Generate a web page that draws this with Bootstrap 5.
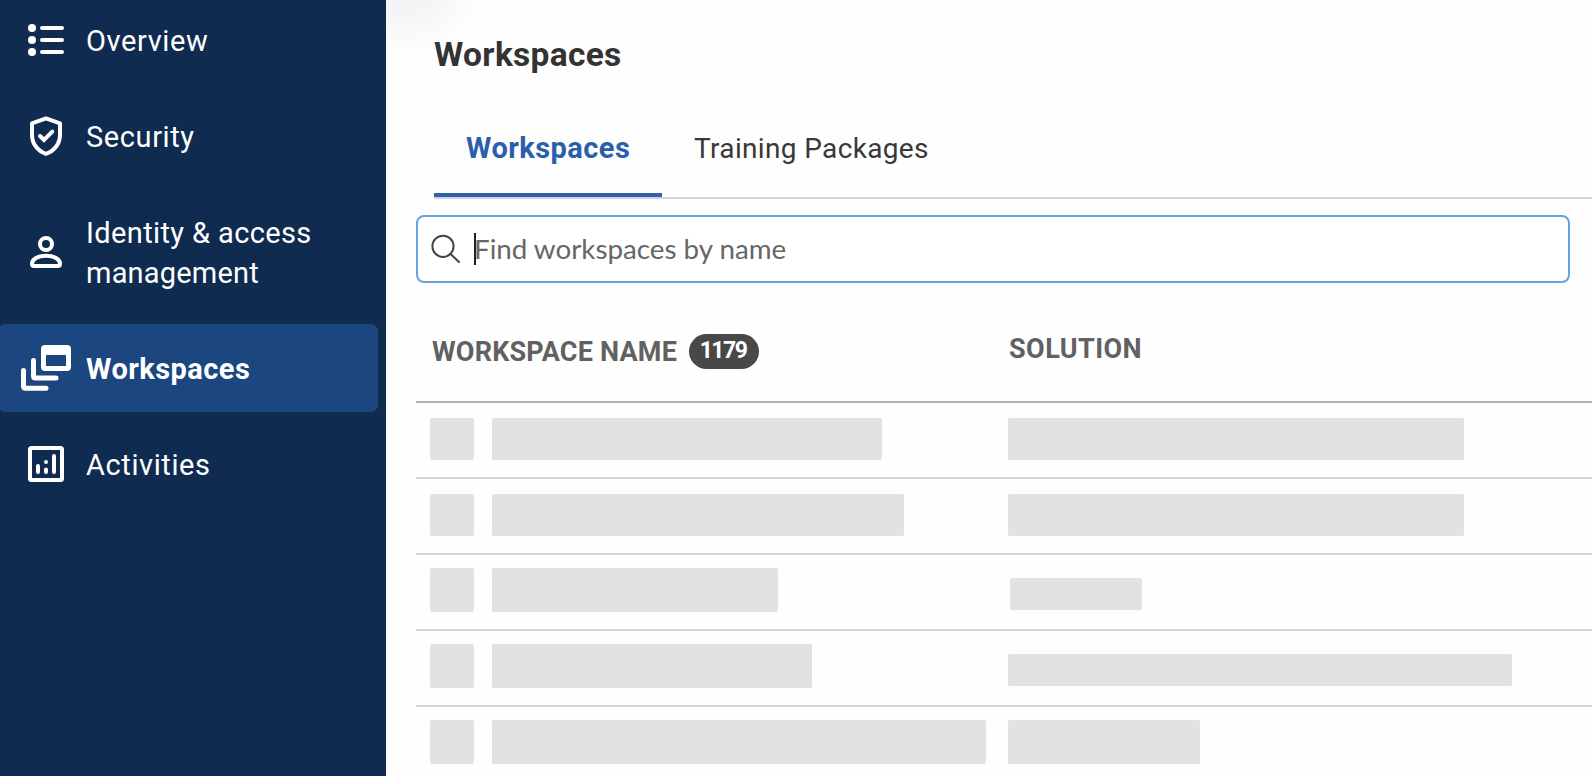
<!DOCTYPE html>
<html lang="en">
<head>
<meta charset="utf-8">
<meta name="viewport" content="width=device-width, initial-scale=1">
<title>Workspaces</title>
<link href="https://cdn.jsdelivr.net/npm/bootstrap@5.3.0/dist/css/bootstrap.min.css" rel="stylesheet">
<style>
  body { font-family: Roboto, "Liberation Sans", sans-serif; color: #333; background: #fefefe; height: 776px; }
  .sidebar { width: 386px; background: #0f2b4f; padding-right: 8px; }
  .side-nav { gap: 8px; margin-top: -4px; }
  .side-nav .nav-link { color: #fff; font-size: 29px; line-height: 40px; letter-spacing: .6px; padding: 24px 0 24px 20px; gap: 14px; }
  .side-nav .nav-link.active { background: #1c4680; border-radius: 7px; font-weight: 700; letter-spacing: .45px; margin-left: -2px; padding-left: 22px; }
  .side-nav svg { width: 52px; height: 48px; flex: none; margin: -4px 0; }
  .side-nav .nav-link > span { padding-top: 1px; margin-bottom: -1px; }
  .side-nav .two-line { letter-spacing: .2px; }
  .side-nav .two-line-first { letter-spacing: .38px; }
  .content { background: radial-gradient(ellipse 74px 62px at 22px -6px, #f0f1f3, #fefefe); }
  .page-title { font-size: 33.5px; line-height: 40px; font-weight: 700; margin: 35px 0 0 48px; letter-spacing: .3px; }
  .tab-strip { margin-left: 48px; margin-top: 43px; height: 81px; border-bottom: 2px solid #d5d6d6; flex-wrap: nowrap; }
  .tab-strip .nav-link { color: #383838; font-size: 28px; line-height: 40px; padding: 11px 32px 24px 32px; height: 81px; border-radius: 0; letter-spacing: .35px; }
  .tab-strip .nav-link.active { color: #2b5fab; font-size: 29px; font-weight: 700; width: 228px; padding-top: 10px; border-bottom: 4px solid #305fa8; background: none; box-shadow: 0 2px #c6d3ea; height: 79px; letter-spacing: .45px; }
  .search-box { margin: 16px 22px 0 30px; height: 68px; border: 2px solid #67a3df; border-radius: 8px; font-family: Lato, sans-serif; font-size: 27.75px; color: #666; padding-left: 12px; }
  .search-box svg { width: 32px; height: 32px; }
  .caret { width: 2px; height: 32px; background: #222; margin-left: 12px; }
  .search-hint { margin-left: -2px; margin-top: -1px; }
  .grid-table { margin-left: 30px; }
  .grid-line { display: grid; grid-template-columns: 578px 1fr; height: 76px; padding: 15px 0 0 14px; border-bottom: 2px solid #d5d5d5; }
  .grid-line:last-child { border-bottom: 0; height: 69px; }
  .grid-line.grid-head { height: 120px; padding-top: 0; border-bottom-color: #b3b3b3; color: #616161; font-size: 27px; font-weight: 700; line-height: 34px; }
  .head-name { padding: 52px 0 0 2px; letter-spacing: .2px; }
  .head-sol { padding: 49px 0 0 1px; letter-spacing: .45px; }
  .count { font-size: 23px; font-weight: 700; line-height: 32px; width: 70px; height: 35px; background: #484848; padding: 1px 2px 2px 0; margin: 51px 0 0 12px; letter-spacing: -1.5px; }
  .bone { display: block; background: #e2e2e2; border-radius: 2px; height: 42px; }
  .bone-icon { width: 44px; margin-right: 18px; }
  .grid-line.tall { padding-top: 13px; }
  .tall .bone { height: 44px; }
  .tall .bone-thin { height: 32px; margin-top: 10px; }
</style>
</head>
<body class="d-flex overflow-hidden">
<aside class="sidebar flex-shrink-0">
  <nav class="side-nav nav flex-column flex-nowrap">
    <a class="nav-link d-flex align-items-center" href="#">
      <svg viewBox="20 16 52 48" fill="#fff" stroke="#fff" stroke-width="4" stroke-linecap="round"><g stroke="none"><circle cx="32" cy="28" r="4"/><circle cx="32" cy="40" r="4"/><circle cx="32" cy="52" r="4"/></g><path d="M42 28H62M42 40H62M42 52H62"/></svg>
      <span>Overview</span></a>
    <a class="nav-link d-flex align-items-center" href="#">
      <svg viewBox="20 112 52 48" fill="none" stroke="#fff" stroke-width="4" stroke-linecap="round" stroke-linejoin="round"><path d="M46 118.4L60 123.4V135C60 143.5 54.5 151 46 153.8C37.5 151 32 143.5 32 135V123.4Z"/><path d="M40 136L44 140L52.3 131.7" stroke-linejoin="miter"/></svg>
      <span>Security</span></a>
    <a class="nav-link d-flex align-items-center" href="#">
      <svg viewBox="20 228 52 48" fill="none" stroke="#fff" stroke-width="4" stroke-linejoin="round"><circle cx="46" cy="244" r="6"/><path d="M32 264C32 259 38 255.8 46 255.8S60 259 60 264Q60 266 58 266H34Q32 266 32 264Z"/></svg>
      <span class="two-line"><span class="two-line-first">Identity &amp; access</span><br>management</span></a>
    <a class="nav-link active d-flex align-items-center" href="#">
      <svg viewBox="20 344 52 48" fill="none" stroke="#fff" stroke-width="5" stroke-linecap="round" stroke-linejoin="round"><path fill="#fff" fill-rule="evenodd" stroke="none" d="M45 345H67Q71 345 71 349V367Q71 371 67 371H45Q41 371 41 367V349Q41 345 45 345ZM46 355V366H66V355Z"/><path d="M33.5 360.5V376Q33.5 378 35.5 378H56M23.5 370.5V386Q23.5 388.3 25.5 388.3H46"/></svg>
      <span>Workspaces</span></a>
    <a class="nav-link d-flex align-items-center" href="#">
      <svg viewBox="20 440 52 48" fill="none" stroke="#fff" stroke-width="4" stroke-linecap="round"><rect x="30" y="448" width="32" height="32" rx="1.5"/><path d="M38 466V472M46 462V462.01M46 469.5V472M54 456V472"/></svg>
      <span>Activities</span></a>
  </nav>
</aside>
<main class="content flex-grow-1">
  <h1 class="page-title">Workspaces</h1>
  <ul class="nav tab-strip">
    <li class="nav-item"><a class="nav-link active" href="#">Workspaces</a></li>
    <li class="nav-item"><a class="nav-link" href="#">Training Packages</a></li>
  </ul>
  <div class="search-box bg-white d-flex align-items-center" role="search">
    <svg viewBox="430 233 32 32" fill="none" stroke="#444" stroke-width="2" stroke-linecap="round"><circle cx="443" cy="246.3" r="10.6"/><path d="M450.5 254L459 262"/></svg>
    <span class="caret"></span><span class="search-hint">Find workspaces by name</span>
  </div>
  <section class="grid-table">
    <div class="grid-line grid-head">
      <div class="d-flex align-items-start"><span class="head-name">WORKSPACE NAME</span><span class="count badge rounded-pill">1179</span></div>
      <div class="head-sol">SOLUTION</div>
    </div>
    <div class="grid-line">
      <div class="d-flex"><span class="bone bone-icon"></span><span class="bone" style="width:390px"></span></div>
      <div><span class="bone" style="width:456px"></span></div>
    </div>
    <div class="grid-line">
      <div class="d-flex"><span class="bone bone-icon"></span><span class="bone" style="width:412px"></span></div>
      <div><span class="bone" style="width:456px"></span></div>
    </div>
    <div class="grid-line tall">
      <div class="d-flex"><span class="bone bone-icon"></span><span class="bone" style="width:286px"></span></div>
      <div><span class="bone bone-thin" style="width:132px;margin-left:2px"></span></div>
    </div>
    <div class="grid-line tall">
      <div class="d-flex"><span class="bone bone-icon"></span><span class="bone" style="width:320px"></span></div>
      <div><span class="bone bone-thin" style="width:504px"></span></div>
    </div>
    <div class="grid-line tall">
      <div class="d-flex"><span class="bone bone-icon"></span><span class="bone" style="width:494px"></span></div>
      <div><span class="bone" style="width:192px"></span></div>
    </div>
  </section>
</main>
<script src="https://cdn.jsdelivr.net/npm/bootstrap@5.3.0/dist/js/bootstrap.bundle.min.js"></script>
</body>
</html>
